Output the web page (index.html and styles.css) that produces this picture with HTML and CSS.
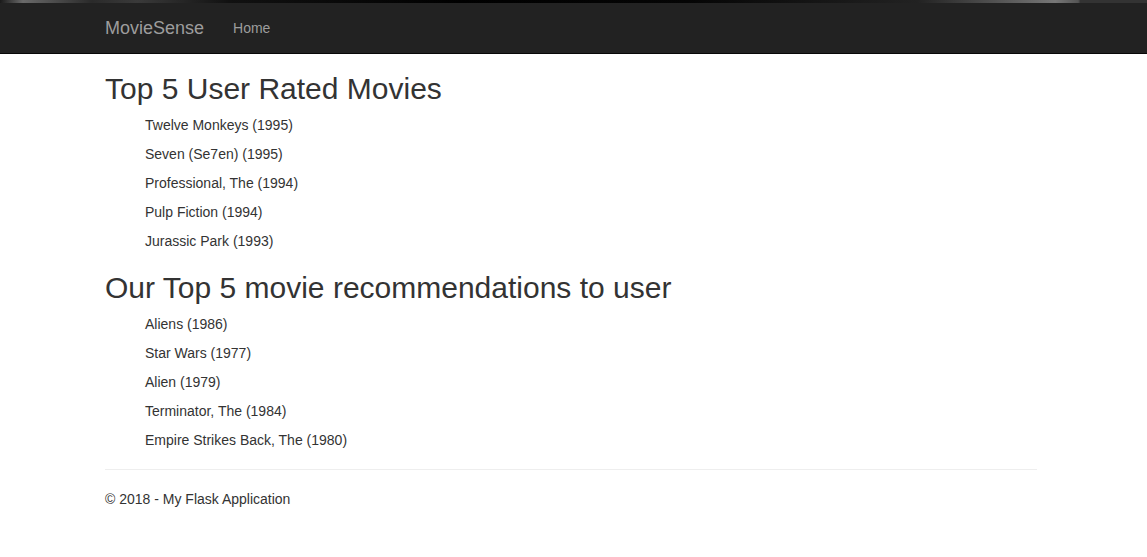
FILE: index.html
```html
<!DOCTYPE html>
<html lang="en">
<head>
<meta charset="utf-8">
<title>MovieSense</title>
<link rel="stylesheet" href="styles.css">
</head>
<body>
<div class="topstrip"></div>
<nav class="navbar">
  <div class="container nav-inner">
    <a class="brand" href="#">MovieSense</a>
    <ul class="nav">
      <li><a href="#">Home</a></li>
    </ul>
  </div>
</nav>
<div class="container body-content">
  <h2>Top 5 User Rated Movies</h2>
  <ul class="movies">
    <li>Twelve Monkeys (1995)</li>
    <li>Seven (Se7en) (1995)</li>
    <li>Professional, The (1994)</li>
    <li>Pulp Fiction (1994)</li>
    <li>Jurassic Park (1993)</li>
  </ul>
  <h2>Our Top 5 movie recommendations to user</h2>
  <ul class="movies">
    <li>Aliens (1986)</li>
    <li>Star Wars (1977)</li>
    <li>Alien (1979)</li>
    <li>Terminator, The (1984)</li>
    <li>Empire Strikes Back, The (1980)</li>
  </ul>
  <hr>
  <footer>
    <p>© 2018 - My Flask Application</p>
  </footer>
</div>
</body>
</html>
```
FILE: styles.css
```css
html, body {
  margin: 0;
  padding: 0;
}
body {
  font-family: "Liberation Sans", Arial, Helvetica, sans-serif;
  font-size: 14px;
  line-height: 20px;
  color: #333;
  background: #fff;
}
.topstrip {
  height: 3px;
  background: linear-gradient(to right, #1a1a1a 0%, #6a6a6a 2%, #2a2a2a 8%, #3a3a3a 12%, #111 20%, #000 40%, #050505 60%, #222 80%, #777 92%, #555 94%, #333 94.2%, #333 100%);
}
.navbar {
  background: #222;
  border-bottom: 1px solid #080808;
  height: 50px;
}
.container {
  width: 932px;
  margin-left: 105px;
}
.nav-inner {
  display: flex;
  align-items: flex-start;
  height: 50px;
}
.brand {
  display: block;
  font-size: 18px;
  line-height: 20px;
  padding: 15px 14px 15px 0;
  color: #9d9d9d;
  text-decoration: none;
}
.nav {
  display: flex;
  list-style: none;
  margin: 0;
  padding: 0;
}
.nav a {
  display: block;
  padding: 15px;
  line-height: 20px;
  color: #9d9d9d;
  text-decoration: none;
}
.body-content {
  padding-top: 1px;
  margin-top: -3px;
}
h2 {
  font-size: 30px;
  font-weight: 500;
  line-height: 1.1;
  margin: 20px 0 10px;
  color: #333;
}
.movies {
  margin: 0 0 10px;
  padding-left: 40px;
  list-style: none;
}
.movies li {
  line-height: 20px;
  margin-bottom: 9px;
}
hr {
  border: 0;
  border-top: 1px solid #eee;
  margin: 19px 0 19px;
}
footer p {
  margin: 0 0 10px;
}
```
